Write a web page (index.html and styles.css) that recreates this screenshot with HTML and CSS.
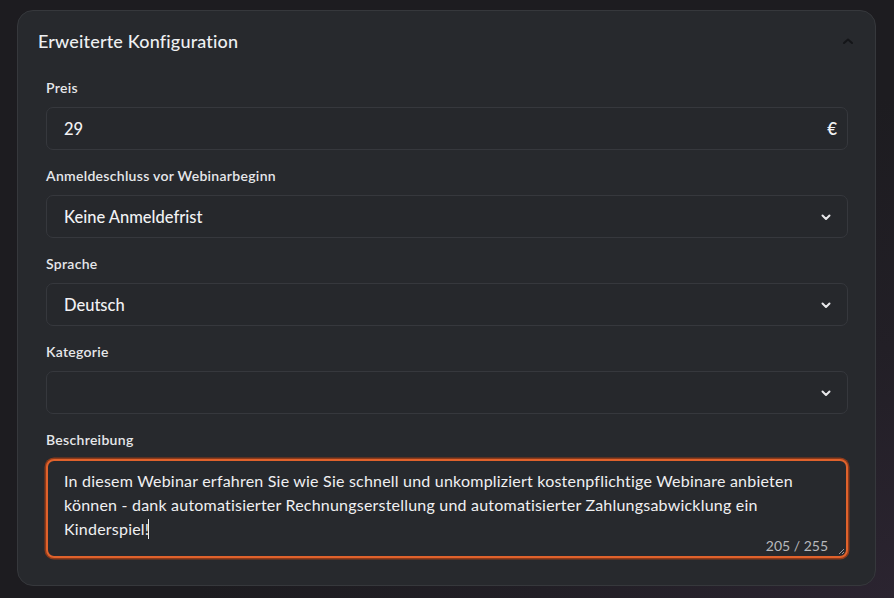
FILE: index.html
```html
<!DOCTYPE html>
<html lang="de">
<head>
<meta charset="utf-8">
<title>Erweiterte Konfiguration</title>
<link rel="stylesheet" href="styles.css">
</head>
<body>
<div class="page">
  <section class="card">
    <header class="card-head">
      <h2 class="card-title">Erweiterte Konfiguration</h2>
      <svg class="chev-up" width="12" height="8" viewBox="0 0 12 8"><path d="M2 6 L6 2.5 L10 6" fill="none" stroke="#141518" stroke-width="2" stroke-linecap="round" stroke-linejoin="round"/></svg>
    </header>
    <div class="card-body">
      <div class="field">
        <label class="label">Preis</label>
        <div class="control">
          <span class="value">29</span>
          <span class="suffix">€</span>
        </div>
      </div>
      <div class="field">
        <label class="label">Anmeldeschluss vor Webinarbeginn</label>
        <div class="control">
          <span class="value">Keine Anmeldefrist</span>
          <svg class="chev" width="12" height="8" viewBox="0 0 12 8"><path d="M2.5 2.5 L6 6 L9.5 2.5" fill="none" stroke="#e8e8ea" stroke-width="2" stroke-linecap="round" stroke-linejoin="round"/></svg>
        </div>
      </div>
      <div class="field">
        <label class="label">Sprache</label>
        <div class="control">
          <span class="value">Deutsch</span>
          <svg class="chev" width="12" height="8" viewBox="0 0 12 8"><path d="M2.5 2.5 L6 6 L9.5 2.5" fill="none" stroke="#e8e8ea" stroke-width="2" stroke-linecap="round" stroke-linejoin="round"/></svg>
        </div>
      </div>
      <div class="field">
        <label class="label">Kategorie</label>
        <div class="control">
          <span class="value"></span>
          <svg class="chev" width="12" height="8" viewBox="0 0 12 8"><path d="M2.5 2.5 L6 6 L9.5 2.5" fill="none" stroke="#e8e8ea" stroke-width="2" stroke-linecap="round" stroke-linejoin="round"/></svg>
        </div>
      </div>
      <div class="field last">
        <label class="label">Beschreibung</label>
        <div class="textarea">
          <p class="text">In diesem Webinar erfahren Sie wie Sie schnell und unkompliziert kostenpflichtige Webinare anbieten können - dank automatisierter Rechnungserstellung und automatisierter Zahlungsabwicklung ein Kinderspiel!<span class="caret"></span></p>
          <span class="counter">205 / 255</span>
          <svg class="grip" width="8" height="8" viewBox="0 0 8 8"><path d="M7 2 L2 7 M7 5 L5 7" stroke="#9a9a9e" stroke-width="1" fill="none"/></svg>
        </div>
      </div>
    </div>
  </section>
</div>
</body>
</html>
```

FILE: styles.css
```css
* { box-sizing: border-box; }
html, body { margin: 0; padding: 0; }
body {
  width: 894px;
  height: 598px;
  overflow: hidden;
  font-family: "Lato", "Noto Sans", sans-serif;
  color: #ececee;
  background: radial-gradient(ellipse 700px 500px at 100% 100%, #2b2430 0%, #221f26 50%, #1d1c20 100%);
}
.page {
  padding: 10px 18px 0 17px;
}
.card {
  background: #27292d;
  border: 1px solid #36383c;
  border-radius: 16px;
  height: 576px;
}
.card-head {
  display: flex;
  align-items: center;
  justify-content: space-between;
  padding: 18px 21px 0 20px;
  height: 42px;
}
.card-title {
  margin: 0;
  font-size: 18px;
  font-weight: 500;
  line-height: 24px;
  letter-spacing: 0.17px;
  color: #eef0f2;
}
.chev-up { margin-top: -1px; }
.card-body {
  padding: 25px 27px 0 28px;
}
.field { margin-bottom: 16px; }
.field.last { margin-bottom: 0; }
.label {
  display: block;
  font-size: 14px;
  font-weight: 600;
  line-height: 20px;
  letter-spacing: 0.3px;
  color: #e6e7ea;
  margin-bottom: 9px;
}
.control {
  height: 43px;
  background: #26282c;
  border: 1.5px solid #36383d;
  border-radius: 7px;
  display: flex;
  align-items: center;
  justify-content: space-between;
  padding: 0 15px 0 17px;
}
.value {
  font-size: 16.5px;
  font-weight: 500;
  color: #f2f2f4;
}
.suffix {
  font-size: 17px;
  font-weight: 600;
  color: #f2f2f4;
  margin-right: -5px;
}
.chev { margin-top: 1px; }
.textarea {
  position: relative;
  height: 99px;
  background: #27292d;
  border: 2px solid #e0622c;
  box-shadow: 0 0 0 1.5px #8c3a1a;
  border-radius: 8px;
  padding: 8px 16px 0 16px;
}
.text {
  margin: 0;
  font-size: 16px;
  line-height: 24px;
  color: #f0f0f2;
  letter-spacing: 0.21px;
}
.caret {
  display: inline-block;
  width: 1px;
  height: 20px;
  background: #f0f0f2;
  vertical-align: -4px;
  margin-left: -1px;
}
.counter {
  position: absolute;
  right: 18px;
  bottom: 2px;
  font-size: 14px;
  color: #b7b8bc;
}
.grip {
  position: absolute;
  right: 1px;
  bottom: 1px;
}
```
